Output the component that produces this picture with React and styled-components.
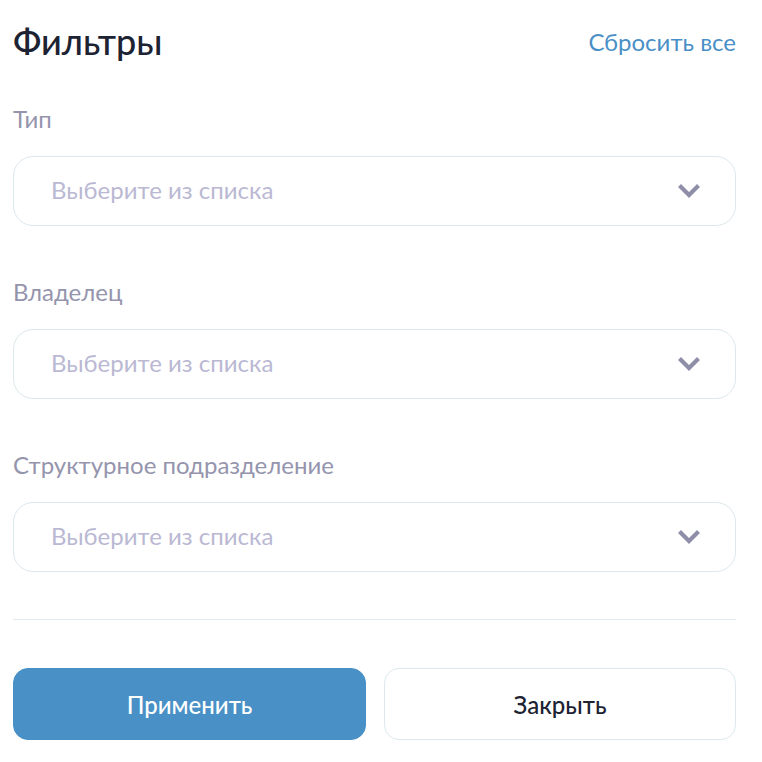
import React from 'react';
import styled, { createGlobalStyle } from 'styled-components';

const GlobalStyle = createGlobalStyle`
    body {
        margin: 0;
        background: #ffffff;
        font-family: Lato, "Noto Sans", sans-serif;
    }
`;

const fields = [
    { id: 'type', label: 'Тип' },
    { id: 'owner', label: 'Владелец' },
    { id: 'unit', label: 'Структурное подразделение' },
];

const Chevron = () => (
    <svg width="22" height="16" viewBox="0 0 22 16">
        <polyline points="3,4 11,12 19,4" fill="none" stroke="#8f8ea9" strokeWidth="4.2" strokeLinecap="square" />
    </svg>
);

const Select = ({ label }) => (
    <Field>
        <Label>{label}</Label>
        <SelectBox>
            <Placeholder>Выберите из списка</Placeholder>
            <Chevron />
        </SelectBox>
    </Field>
);

const App = () => (
    <>
        <GlobalStyle />
        <Panel>
            <Header>
                <Title>Фильтры</Title>
                <ResetLink>Сбросить все</ResetLink>
            </Header>
            <Fields>
                {fields.map(f => <Select key={f.id} label={f.label} />)}
            </Fields>
            <Divider />
            <Buttons>
                <Button primary>Применить</Button>
                <Button>Закрыть</Button>
            </Buttons>
        </Panel>
    </>
);

const Panel = styled.div`
    width: 723px;
    margin-left: 13px;
    padding-top: 22px;
`;

const Header = styled.div`
    display: flex;
    justify-content: space-between;
    align-items: center;
    height: 38px;
`;

const Title = styled.h1`
    margin: 0;
    font-size: 36px;
    line-height: 38px;
    font-weight: 500;
    color: #1d2332;
`;

const ResetLink = styled.button`
    border: none;
    background: none;
    padding: 0;
    font-family: inherit;
    font-size: 24px;
    color: #4a8fc6;
    cursor: pointer;
`;

const Fields = styled.div`
    display: flex;
    flex-direction: column;
    gap: 54px;
    margin-top: 47px;
`;

const Field = styled.div`
    display: flex;
    flex-direction: column;
    gap: 25px;
`;

const Label = styled.div`
    font-size: 24px;
    line-height: 24px;
    color: #9594ad;
`;

const SelectBox = styled.div`
    display: flex;
    align-items: center;
    justify-content: space-between;
    height: 68px;
    padding: 0 35px 0 37px;
    border: 1px solid #dbe8ee;
    border-radius: 20px;
    cursor: pointer;
`;

const Placeholder = styled.span`
    font-size: 24px;
    line-height: 28px;
    color: #bab8d3;
    margin-top: -2px;
`;

const Divider = styled.hr`
    margin: 47px 0 0;
    border: none;
    border-top: 1px solid #dfe9ef;
`;

const Buttons = styled.div`
    display: grid;
    grid-template-columns: 353px 1fr;
    gap: 18px;
    margin-top: 48px;
`;

const Button = styled.button`
    height: 72px;
    border-radius: 15px;
    font-family: inherit;
    font-size: 24px;
    font-weight: 500;
    cursor: pointer;
    border: 1px solid ${p => (p.primary ? '#4890c5' : '#dbe8ee')};
    background: ${p => (p.primary ? '#4890c5' : '#ffffff')};
    color: ${p => (p.primary ? '#ffffff' : '#1d2332')};
`;

export default App;
